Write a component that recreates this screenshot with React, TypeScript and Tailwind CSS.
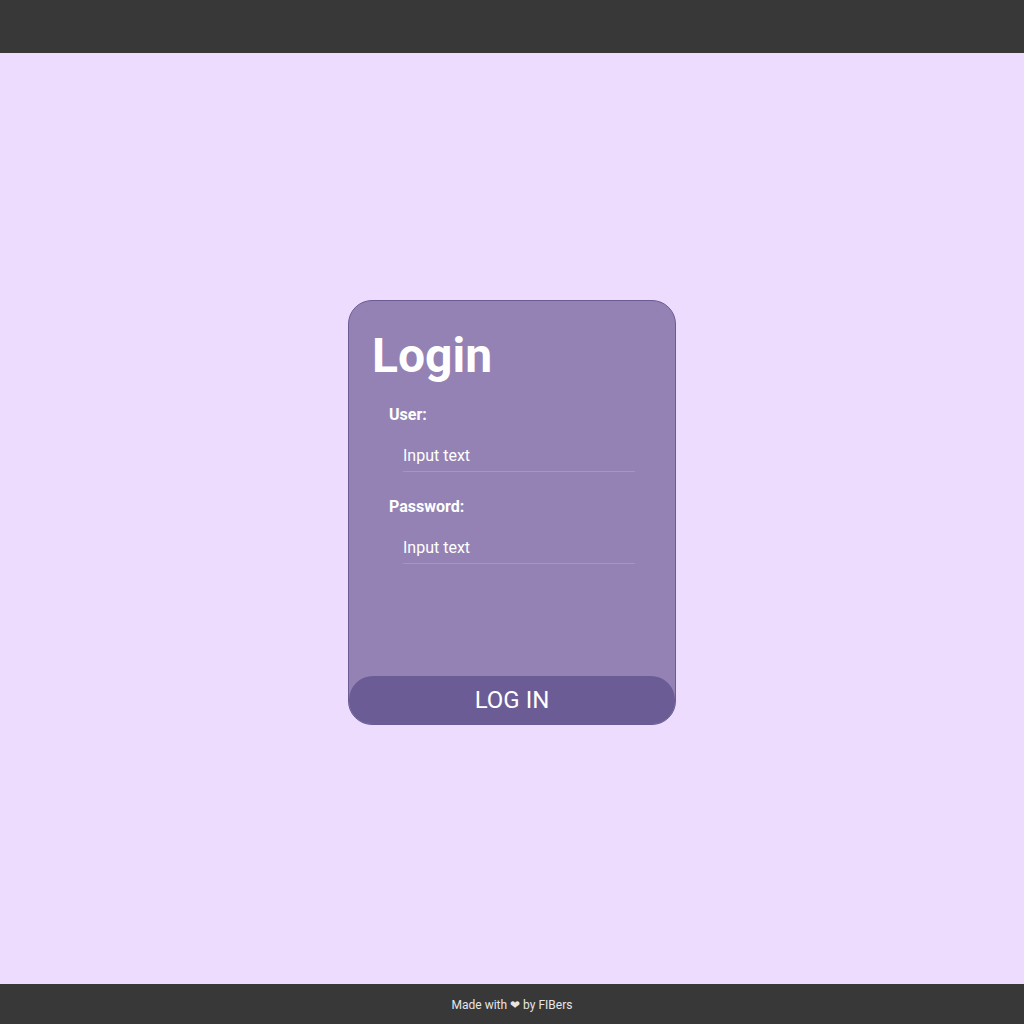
export default function App() {
  return (
    <div className="flex min-h-screen flex-col bg-[#eddcfe] font-['Roboto',sans-serif]">
      <header className="h-[53px] w-full bg-[#383838]" />

      <main className="flex flex-1 items-center justify-center pb-[12px]">
        <form className="flex h-[425px] w-[328px] flex-col overflow-hidden rounded-[24px] border border-[#6c5c96] bg-[#9482b4]">
          <div className="flex-1 px-[23px] pt-[25px]">
            <h1 className="text-[48px] font-bold leading-[60px] text-white">Login</h1>

            <div className="pl-[17px] pt-[19px]">
              <label className="block text-[16px] font-bold leading-[20px] text-white">User:</label>
              <input
                type="text"
                placeholder="Input text"
                className="mt-[21px] ml-[14px] block w-[232px] border-b border-[#a595c4] bg-transparent pb-[5px] text-[16px] leading-[20px] text-white outline-none placeholder:text-white"
              />

              <label className="mt-[25px] block text-[16px] font-bold leading-[20px] text-white">Password:</label>
              <input
                type="password"
                placeholder="Input text"
                className="mt-[21px] ml-[14px] block w-[232px] border-b border-[#a595c4] bg-transparent pb-[5px] text-[16px] leading-[20px] text-white outline-none placeholder:text-white"
              />
            </div>
          </div>

          <button
            type="submit"
            className="h-[48px] w-full shrink-0 rounded-t-[24px] bg-[#6c5c96] text-[24px] font-normal text-white"
          >
            LOG IN
          </button>
        </form>
      </main>

      <footer className="flex h-[40px] w-full items-center justify-center bg-[#383838] pt-[1px] text-[12px] text-[#e6e6e6]">
        Made with ❤ by FIBers
      </footer>
    </div>
  );
}
